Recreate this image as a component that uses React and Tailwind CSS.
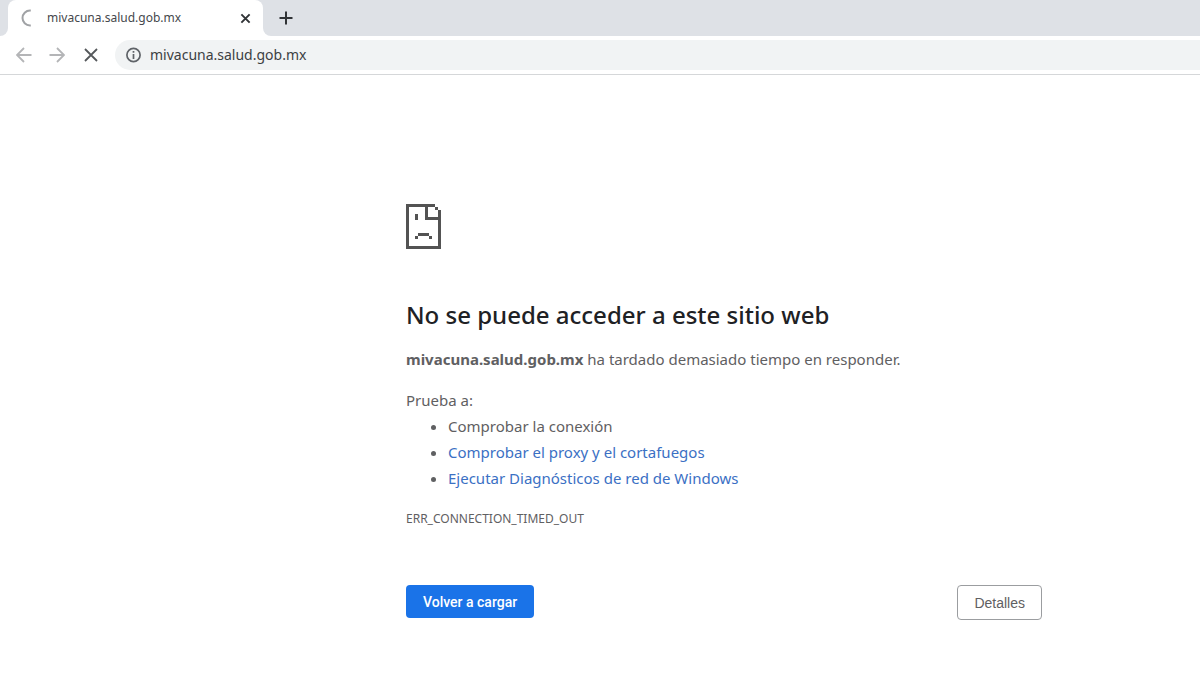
function Spinner() {
  return (
    <svg className="h-5 w-5 shrink-0" viewBox="0 0 20 20" fill="none" stroke="#a0a2a5" strokeWidth="2" aria-hidden="true">
      <path d="M14.8 2.5H14A7.5 7.5 0 0 0 14 17.5H14.8" />
    </svg>
  );
}

function Cross({ className, width }) {
  return (
    <svg className={className} viewBox="0 0 16 16" fill="none" stroke="currentColor" strokeWidth={width} aria-hidden="true">
      <path d="M2 2l12 12M14 2L2 14" />
    </svg>
  );
}

function Arrow({ forward }) {
  return (
    <svg className="h-4 w-4" viewBox="0 0 16 16" fill="none" stroke="currentColor" strokeWidth="1.8" aria-hidden="true">
      <path d={forward ? "M0.5 8h14M8 1l7 7-7 7" : "M15.5 8h-14M8 1L1 8l7 7"} />
    </svg>
  );
}

function SadPage() {
  return (
    <svg className="h-[45px] w-[35px]" viewBox="0 0 35 45" fill="#535353" shapeRendering="crispEdges" aria-hidden="true">
      <path d="M0 0h29v3H0zM0 3h3v42H0zM3 42h32v3H3zM32 6h3v36h-3zM29 3h3v3h-3zM19 3h3v13h-3zM22 13h10v3H22z" />
      <path d="M9 10h3v6H9zM12 29h11v3H12zM9 32h3v3H9zM23 32h3v3h-3z" />
    </svg>
  );
}

export default function App() {
  return (
    <div className="min-h-screen bg-white font-['Noto_Sans',sans-serif] text-[#5f6062]">
      <header>
        <div className="flex h-9 items-stretch bg-[#dee1e6]">
          <div className="w-2 bg-white">
            <div className="h-full rounded-br-lg bg-[#dee1e6]" />
          </div>
          <div className="bg-[#dee1e6]">
            <div className="flex h-full w-[255px] items-center rounded-t-lg bg-white pr-3 pl-2 text-xs text-[#45484c]">
              <Spinner />
              <span className="ml-[11px] flex-1">mivacuna.salud.gob.mx</span>
              <button type="button" aria-label="Cerrar" className="text-[#303336]">
                <Cross className="h-[11px] w-[11px]" width="2.8" />
              </button>
            </div>
          </div>
          <div className="w-2 bg-white">
            <div className="h-full rounded-bl-lg bg-[#dee1e6]" />
          </div>
          <button type="button" aria-label="Nueva pestaña" className="ml-2 text-[#303336]">
            <svg className="h-[14px] w-[14px]" viewBox="0 0 14 14" stroke="currentColor" strokeWidth="2" aria-hidden="true">
              <path d="M7 0.5v13M0.5 7h13" />
            </svg>
          </button>
        </div>
        <div className="flex h-[39px] items-center border-b border-[#d5d7d9] pl-4">
          <button type="button" aria-label="Atrás" className="text-[#b4b5b7]">
            <Arrow />
          </button>
          <button type="button" aria-label="Adelante" className="ml-[17px] text-[#b4b5b7]">
            <Arrow forward />
          </button>
          <button type="button" aria-label="Detener" className="ml-[18px] text-[#55585b]">
            <Cross className="h-4 w-4" width="1.8" />
          </button>
          <label className="ml-4 flex h-[30px] flex-1 items-center rounded-l-full bg-[#f1f3f4] pl-[11px]">
            <svg className="h-4 w-4 shrink-0" viewBox="0 0 16 16" fill="none" stroke="#5f6368" strokeWidth="1.7" aria-hidden="true">
              <circle cx="7.5" cy="8" r="6.6" />
              <path d="M7.5 7v5M7.5 4v1.8" />
            </svg>
            <input aria-label="Dirección" defaultValue="mivacuna.salud.gob.mx" className="ml-2 min-w-0 flex-1 bg-transparent text-sm text-[#3c4043] outline-none" />
          </label>
        </div>
      </header>
      <div className="pt-[129px] pl-[248px]">
        <main className="mx-auto w-full max-w-[636px]">
          <SadPage />
          <h1 className="mt-[50px] text-2xl leading-8 font-medium text-[#202124]">No se puede acceder a este sitio web</h1>
          <p className="mt-[15px] text-[15px] leading-[26px]">
            <strong className="font-bold">mivacuna.salud.gob.mx</strong> ha tardado demasiado tiempo en responder.
          </p>
          <p className="mt-[15px] text-[15px] leading-[26px]">Prueba a:</p>
          <ul className="list-disc pl-[42px] text-[15px] leading-[26px]">
            <li>Comprobar la conexión</li>
            <li><a href="#proxy" className="text-[#3b70c4]">Comprobar el proxy y el cortafuegos</a></li>
            <li><a href="#red" className="text-[#3b70c4]">Ejecutar Diagnósticos de red de Windows</a></li>
          </ul>
          <p className="mt-[15px] text-xs leading-[26px]">ERR_CONNECTION_TIMED_OUT</p>
          <div className="mt-[53px] flex items-start justify-between text-sm">
            <button type="button" className="h-[33px] rounded bg-[#1a73e8] px-[17px] font-['Roboto',sans-serif] font-medium text-white">Volver a cargar</button>
            <button type="button" className="h-[35px] rounded border border-[#9b9da0] px-4 font-['Liberation_Sans',sans-serif]">Detalles</button>
          </div>
        </main>
      </div>
    </div>
  );
}
